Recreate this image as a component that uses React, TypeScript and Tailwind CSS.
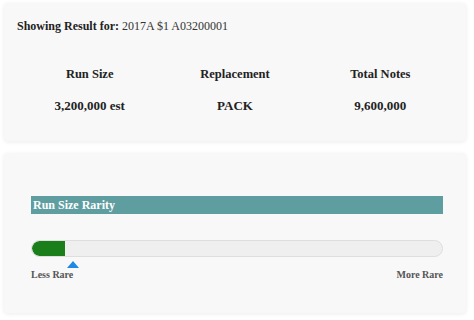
import React from "react";

export default function App() {
  const serif = { fontFamily: '"Liberation Serif", "DejaVu Serif", serif' };
  return (
    <div className="w-[474px] h-[320px] bg-white overflow-hidden pt-[3px] px-[4px]" style={serif}>
      <div className="w-[462px] h-[138px] bg-[#f8f8f8] rounded-[4px] shadow-[0_1px_4px_rgba(0,0,0,0.08)] px-[13px] pt-[14px]">
        <div className="text-[12px] text-[#222] leading-[18px]">
          <span className="font-bold">Showing Result for:</span>{" "}
          <span className="text-[#333]">2017A $1 A03200001</span>
        </div>
        <div className="grid grid-cols-3 mt-[31px] text-[12.5px] font-bold text-[#222] text-center leading-[16px]">
          <div>Run Size</div>
          <div>Replacement</div>
          <div>Total Notes</div>
        </div>
        <div className="grid grid-cols-3 mt-[16px] text-[13px] font-bold text-[#222] text-center leading-[16px]">
          <div>3,200,000 est</div>
          <div>PACK</div>
          <div>9,600,000</div>
        </div>
      </div>
      <div className="w-[462px] h-[160px] mt-[12px] bg-[#f8f8f8] rounded-[4px] shadow-[0_1px_4px_rgba(0,0,0,0.08)] pl-[27px] pr-[23px] pt-[43px]">
        <div className="h-[18px] bg-[#5f9ea0] text-white font-bold text-[12px] leading-[18px] px-[2px]">
          Run Size Rarity
        </div>
        <div className="relative mt-[26px] h-[17px] rounded-full bg-[#efefef] border border-[#dedede] overflow-hidden">
          <div className="h-full w-[33px] bg-[#1a7f1a] rounded-l-full" />
        </div>
        <div className="relative h-[12px]">
          <svg className="absolute left-[36px] top-[4px]" width="12" height="7" viewBox="0 0 12 7">
            <polygon points="6,0 12,7 0,7" fill="#1e88e5" />
          </svg>
        </div>
        <div className="flex justify-between text-[10px] font-bold text-[#555] leading-[12px]">
          <span>Less Rare</span>
          <span>More Rare</span>
        </div>
      </div>
    </div>
  );
}
